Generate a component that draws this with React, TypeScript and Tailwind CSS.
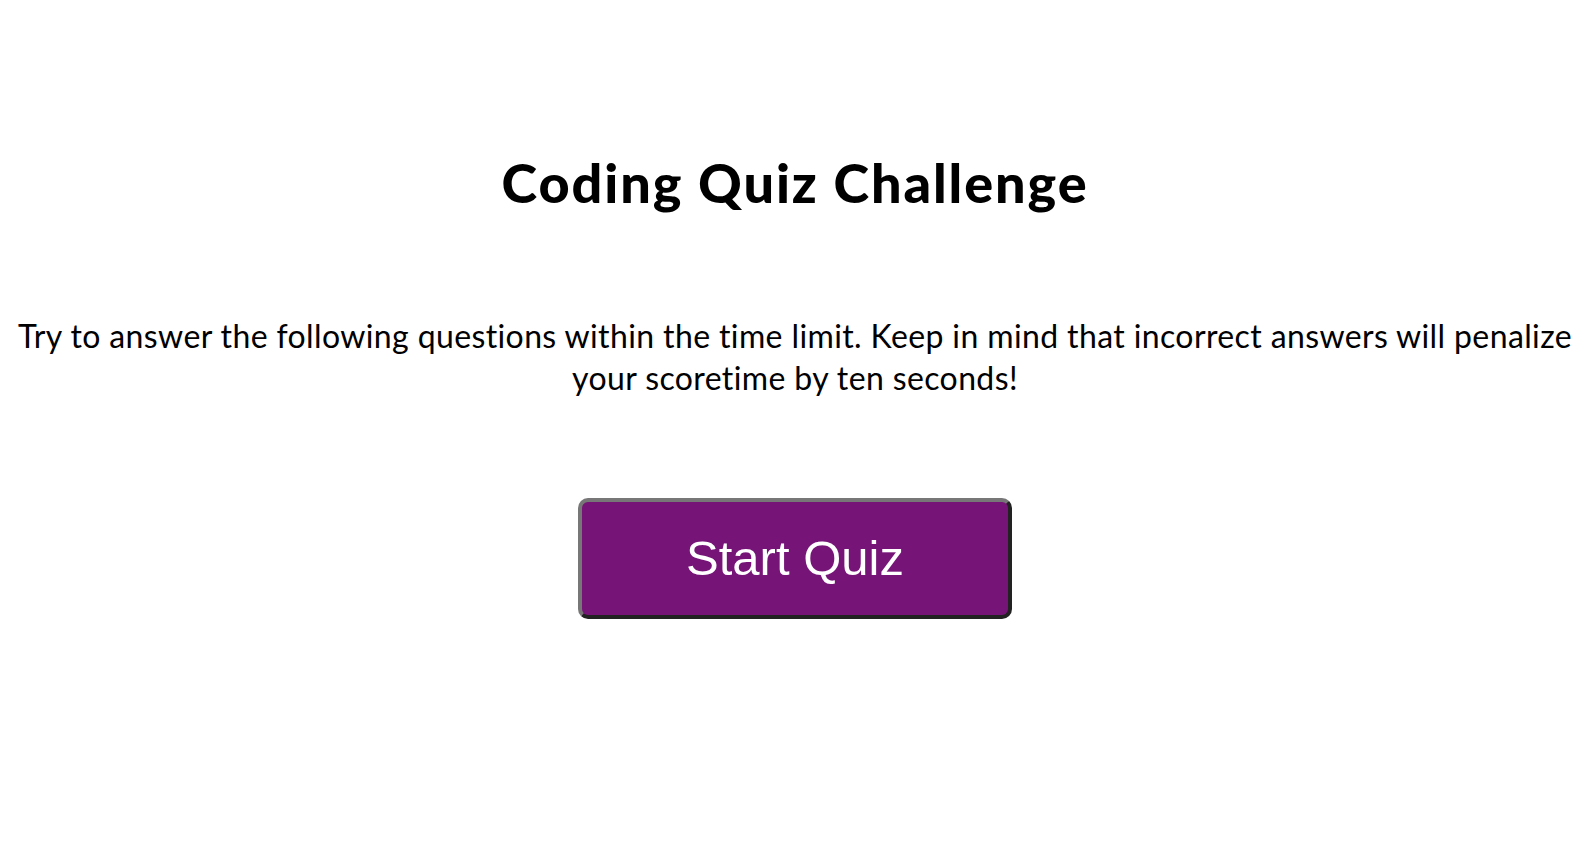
export default function App() {
  return (
    <div className="min-h-screen bg-white text-black">
      <main className="flex flex-col items-center pl-[4px] pr-[10px] pt-[148px] text-center font-['Lato','DejaVu_Sans',sans-serif]">
        <h1 className="text-[54px] font-black leading-[70px] tracking-[1.9px]">
          Coding Quiz Challenge
        </h1>
        <p className="mt-[97px] text-[32px] leading-[42px] tracking-[0.38px]">
          Try to answer the following questions within the time limit. Keep in mind that incorrect answers will penalize your scoretime by ten seconds!
        </p>
        <button className="mt-[99px] h-[121px] w-[434px] rounded-[10px] border-4 border-solid border-t-[#777] border-l-[#777] border-r-[#222] border-b-[#222] bg-[#771478] font-['Liberation_Sans',Arial,sans-serif] text-[49px] text-white">
          Start Quiz
        </button>
      </main>
    </div>
  );
}
